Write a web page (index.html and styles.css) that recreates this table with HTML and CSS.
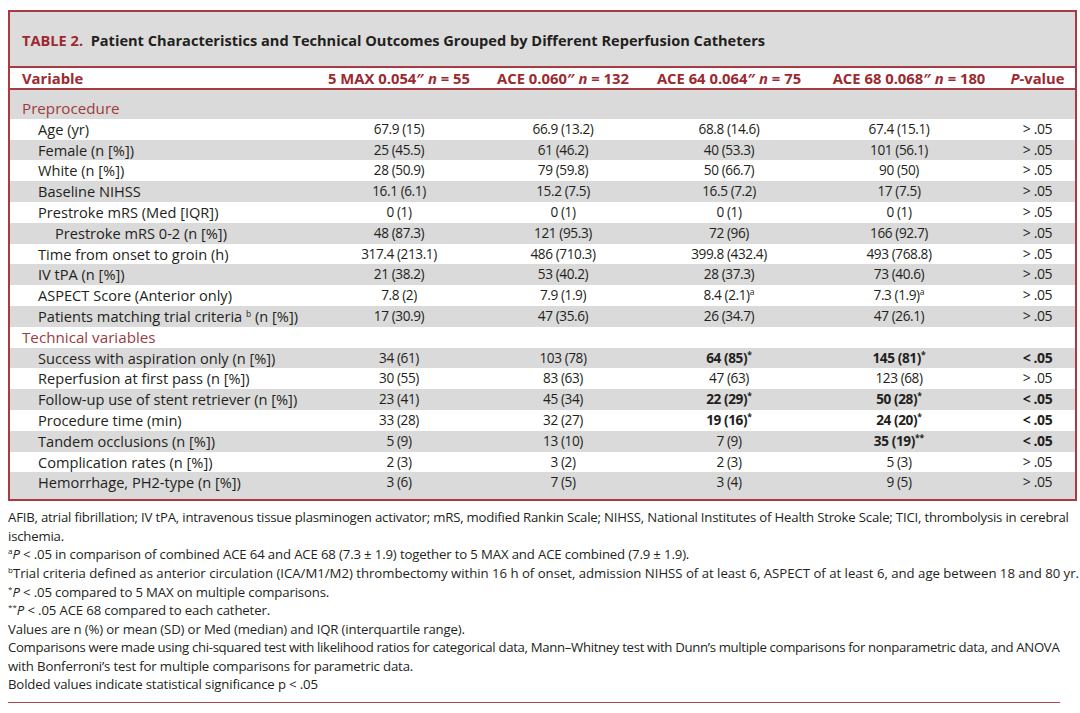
FILE: index.html
```html
<!DOCTYPE html>
<html lang="en">
<head>
<meta charset="utf-8">
<title>Table 2</title>
<link rel="stylesheet" href="styles.css">
</head>
<body>
<div class="tbl">
  <div class="title"><span class="tnum">TABLE 2.</span>&nbsp; Patient Characteristics and Technical Outcomes Grouped by Different Reperfusion Catheters</div>
  <table>
    <colgroup>
      <col class="w-lab"><col class="w-c1"><col class="w-c2"><col class="w-c3"><col class="w-c4"><col class="w-p">
    </colgroup>
    <thead>
      <tr>
        <th class="lab">Variable</th>
        <th>5 MAX 0.054″ <i>n</i> = 55</th>
        <th>ACE 0.060″ <i>n</i> = 132</th>
        <th>ACE 64 0.064″ <i>n</i> = 75</th>
        <th>ACE 68 0.068″ <i>n</i> = 180</th>
        <th><i>P</i>-value</th>
      </tr>
    </thead>
    <tbody>
      <tr class="g sec first"><td class="lab">Preprocedure</td><td></td><td></td><td></td><td></td><td></td></tr>
      <tr><td class="lab item">Age (yr)</td><td>67.9 (15)</td><td>66.9 (13.2)</td><td>68.8 (14.6)</td><td class="c4">67.4 (15.1)</td><td class="p">&gt; .05</td></tr>
      <tr class="g"><td class="lab item">Female (n [%])</td><td>25 (45.5)</td><td>61 (46.2)</td><td>40 (53.3)</td><td class="c4">101 (56.1)</td><td class="p">&gt; .05</td></tr>
      <tr><td class="lab item">White (n [%])</td><td>28 (50.9)</td><td>79 (59.8)</td><td>50 (66.7)</td><td class="c4">90 (50)</td><td class="p">&gt; .05</td></tr>
      <tr class="g"><td class="lab item">Baseline NIHSS</td><td>16.1 (6.1)</td><td>15.2 (7.5)</td><td>16.5 (7.2)</td><td class="c4">17 (7.5)</td><td class="p">&gt; .05</td></tr>
      <tr><td class="lab item">Prestroke mRS (Med [IQR])</td><td>0 (1)</td><td>0 (1)</td><td>0 (1)</td><td class="c4">0 (1)</td><td class="p">&gt; .05</td></tr>
      <tr class="g"><td class="lab sub">Prestroke mRS 0-2 (n [%])</td><td>48 (87.3)</td><td>121 (95.3)</td><td>72 (96)</td><td class="c4">166 (92.7)</td><td class="p">&gt; .05</td></tr>
      <tr><td class="lab item">Time from onset to groin (h)</td><td>317.4 (213.1)</td><td>486 (710.3)</td><td>399.8 (432.4)</td><td class="c4">493 (768.8)</td><td class="p">&gt; .05</td></tr>
      <tr class="g"><td class="lab item">IV tPA (n [%])</td><td>21 (38.2)</td><td>53 (40.2)</td><td>28 (37.3)</td><td class="c4">73 (40.6)</td><td class="p">&gt; .05</td></tr>
      <tr><td class="lab item">ASPECT Score (Anterior only)</td><td>7.8 (2)</td><td>7.9 (1.9)</td><td>8.4 (2.1)<sup>a</sup></td><td class="c4">7.3 (1.9)<sup>a</sup></td><td class="p">&gt; .05</td></tr>
      <tr class="g"><td class="lab item">Patients matching trial criteria <sup>b</sup> (n [%])</td><td>17 (30.9)</td><td>47 (35.6)</td><td>26 (34.7)</td><td class="c4">47 (26.1)</td><td class="p">&gt; .05</td></tr>
      <tr class="sec"><td class="lab">Technical variables</td><td></td><td></td><td></td><td></td><td></td></tr>
      <tr class="g"><td class="lab item">Success with aspiration only (n [%])</td><td>34 (61)</td><td>103 (78)</td><td><b>64 (85)<sup>*</sup></b></td><td class="c4"><b>145 (81)<sup>*</sup></b></td><td class="p"><b>&lt; .05</b></td></tr>
      <tr><td class="lab item">Reperfusion at first pass (n [%])</td><td>30 (55)</td><td>83 (63)</td><td>47 (63)</td><td class="c4">123 (68)</td><td class="p">&gt; .05</td></tr>
      <tr class="g"><td class="lab item">Follow-up use of stent retriever (n [%])</td><td>23 (41)</td><td>45 (34)</td><td><b>22 (29)<sup>*</sup></b></td><td class="c4"><b>50 (28)<sup>*</sup></b></td><td class="p"><b>&lt; .05</b></td></tr>
      <tr><td class="lab item">Procedure time (min)</td><td>33 (28)</td><td>32 (27)</td><td><b>19 (16)<sup>*</sup></b></td><td class="c4"><b>24 (20)<sup>*</sup></b></td><td class="p"><b>&lt; .05</b></td></tr>
      <tr class="g"><td class="lab item">Tandem occlusions (n [%])</td><td>5 (9)</td><td>13 (10)</td><td>7 (9)</td><td class="c4"><b>35 (19)<sup>**</sup></b></td><td class="p"><b>&lt; .05</b></td></tr>
      <tr><td class="lab item">Complication rates (n [%])</td><td>2 (3)</td><td>3 (2)</td><td>2 (3)</td><td class="c4">5 (3)</td><td class="p">&gt; .05</td></tr>
      <tr class="g last"><td class="lab item">Hemorrhage, PH2-type (n [%])</td><td>3 (6)</td><td>7 (5)</td><td>3 (4)</td><td class="c4">9 (5)</td><td class="p">&gt; .05</td></tr>
    </tbody>
  </table>
</div>
<div class="notes">
  <p class="n-abbr">AFIB, atrial fibrillation; IV tPA, intravenous tissue plasminogen activator; mRS, modified Rankin Scale; NIHSS, National Institutes of Health Stroke Scale; TICI, thrombolysis in cerebral<br>ischemia.</p>
  <p><sup>a</sup><i>P</i> &lt; .05 in comparison of combined ACE 64 and ACE 68 (7.3 ± 1.9) together to 5 MAX and ACE combined (7.9 ± 1.9).</p>
  <p class="n-wide"><sup>b</sup>Trial criteria defined as anterior circulation (ICA/M1/M2) thrombectomy within 16 h of onset, admission NIHSS of at least 6, ASPECT of at least 6, and age between 18 and 80 yr.</p>
  <p><sup>*</sup><i>P</i> &lt; .05 compared to 5 MAX on multiple comparisons.</p>
  <p><sup>**</sup><i>P</i> &lt; .05 ACE 68 compared to each catheter.</p>
  <p>Values are n (%) or mean (SD) or Med (median) and IQR (interquartile range).</p>
  <p><span class="n-tight">Comparisons were made using chi-squared test with likelihood ratios for categorical data, Mann–Whitney test with Dunn’s multiple comparisons for nonparametric data, and ANOVA</span><br>with Bonferroni’s test for multiple comparisons for parametric data.</p>
  <p>Bolded values indicate statistical significance p &lt; .05</p>
</div>
<div class="rule"></div>
</body>
</html>
```

FILE: styles.css
```css
html, body {
  margin: 0;
  padding: 0;
  background: #ffffff;
}
body {
  padding: 10px 0 0 8px;
  font-family: "Open Sans", "Liberation Sans", sans-serif;
  color: #231f20;
  width: 1072px;
}
.tbl {
  width: 1065px;
  border: 2px solid #a63b41;
}
.title {
  background: #dcdcdc;
  font-weight: 700;
  font-size: 14.6px;
  letter-spacing: 0;
  line-height: 22px;
  padding: 17px 12px 15px;
  border-bottom: 2px solid #a63b41;
  white-space: nowrap;
}
.tnum { color: #9c2a30; }
table {
  border-collapse: collapse;
  width: 1065px;
  table-layout: fixed;
}
.w-lab { width: 302px; }
.w-c1 { width: 174px; }
.w-c2 { width: 154px; }
.w-c3 { width: 178px; }
.w-c4 { width: 182px; }
.w-p { width: 75px; }
th {
  color: #9c2a30;
  font-weight: 700;
  font-size: 14.8px;
  letter-spacing: 0;
  height: 20px;
  line-height: 20px;
  padding: 0;
  text-align: center;
  border-bottom: 2px solid #a63b41;
  white-space: nowrap;
}
th i { font-style: italic; }
td {
  font-size: 13.6px;
  letter-spacing: -0.4px;
  line-height: 20.8px;
  height: 20.8px;
  padding: 0;
  text-align: center;
  white-space: nowrap;
}
td.lab, th.lab { text-align: left; padding-left: 12px; }
td.lab { font-size: 14.6px; letter-spacing: 0; }
td.item { padding-left: 28px; }
td.sub { padding-left: 45px; }
td.c4 { padding-right: 20px; }
td.p { font-size: 14px; }
tr.g td { background: #dadada; }
tr.sec td.lab { color: #9e3a40; font-size: 15.2px; padding-left: 12px; }
tr.first td { padding-top: 8px; }
tr.last td { padding-bottom: 6px; }
sup {
  font-size: 8.5px;
  line-height: 0;
  vertical-align: 5px;
  letter-spacing: 0;
}
b { font-weight: 700; }
.notes {
  margin-top: 7px;
  width: 1072px;
  font-size: 13.2px;
  letter-spacing: -0.15px;
  line-height: 18.6px;
}
.notes p {
  margin: 0;
  white-space: nowrap;
}
.notes .n-abbr { letter-spacing: -0.2px; }
.notes .n-wide { letter-spacing: -0.02px; }
.notes .n-tight { letter-spacing: -0.33px; }
.notes sup {
  font-size: 8px;
  vertical-align: 5px;
}
.rule {
  margin-top: 8px;
  width: 1052px;
  height: 1px;
  background: #b2474c;
}
```
